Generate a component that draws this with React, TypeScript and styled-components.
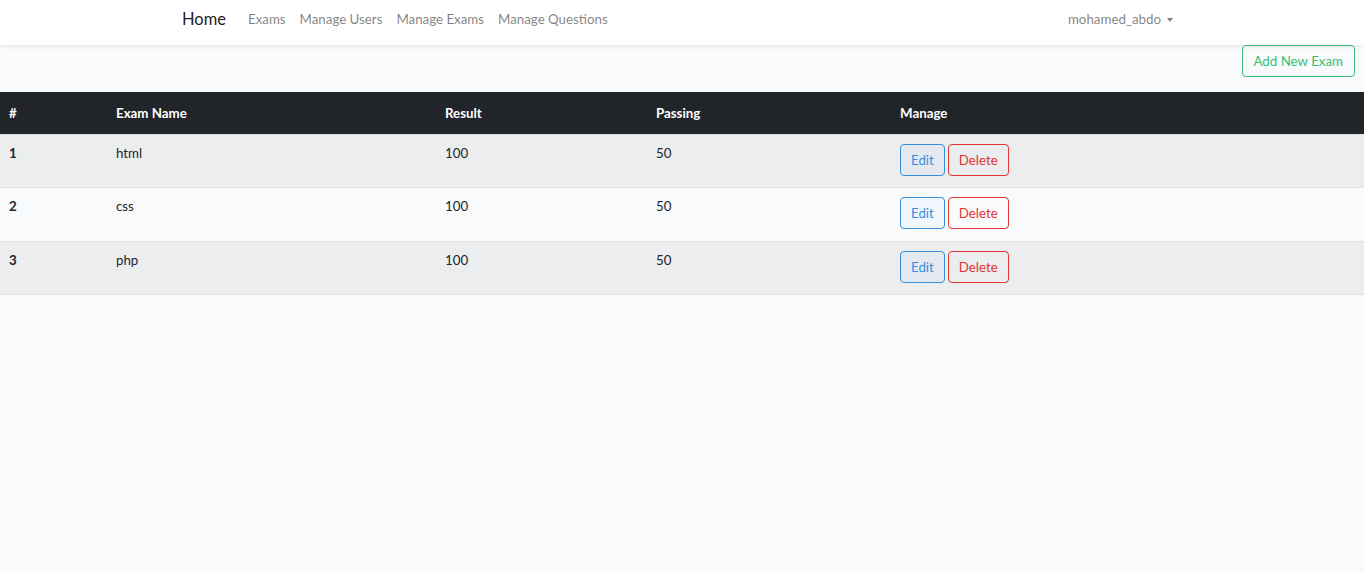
import React from "react";
import styled, { createGlobalStyle } from "styled-components";

const GlobalStyle = createGlobalStyle`
  html, body { margin: 0; padding: 0; }
  body {
    background: #f8fafc;
    font-family: Lato, "Noto Sans", sans-serif;
    font-size: 13.3px;
    color: #212529;
    line-height: 1.6;
  }
  * { box-sizing: border-box; }
`;

const Page = styled.div`
  min-height: 572px;
  background: #f8fafc;
`;

const NavBar = styled.nav`
  background: #fff;
  height: 45px;
  box-shadow: 0 2px 4px rgba(0, 0, 0, 0.075);
  position: relative;
  z-index: 1;
`;

const NavInner = styled.div`
  width: 1030px;
  margin: 0 auto;
  padding: 0 15px 6px;
  height: 100%;
  display: flex;
  align-items: center;
`;

const Brand = styled.a`
  font-size: 16.5px;
  color: rgba(0, 0, 0, 0.9);
  text-decoration: none;
  margin-right: 15px;
  line-height: 1;
`;

const NavList = styled.div`
  display: flex;
  align-items: center;
`;

const NavLink = styled.a`
  font-size: 13.3px;
  color: rgba(0, 0, 0, 0.5);
  text-decoration: none;
  padding: 0 7px;
`;

const Spacer = styled.div`
  flex: 1;
`;

const UserMenu = styled.a`
  font-size: 13.3px;
  color: rgba(0, 0, 0, 0.5);
  display: flex;
  align-items: center;
  padding: 0 9px 0 8px;
  text-decoration: none;
`;

const Caret = styled.span`
  display: inline-block;
  margin-left: 6px;
  margin-top: 1px;
  border-top: 4px solid rgba(0, 0, 0, 0.5);
  border-left: 3.5px solid transparent;
  border-right: 3.5px solid transparent;
`;

const Toolbar = styled.div`
  display: flex;
  justify-content: flex-end;
  padding-right: 9px;
  margin-bottom: 15px;
`;

const OutlineButton = styled.button<{ $tone: string; $tint?: string }>`
  font-family: inherit;
  font-size: 13.3px;
  line-height: 20px;
  height: 32px;
  padding: 5px 11px;
  background: ${(p) => p.$tint || "transparent"};
  color: ${(p) => p.$tone};
  border: 1px solid ${(p) => p.$tone};
  border-radius: 4px;
  cursor: pointer;
`;

const RowButton = styled(OutlineButton)`
  padding: 5px 10px;
`;

const Table = styled.table`
  width: 100%;
  border-collapse: collapse;
`;

const HeadRow = styled.tr`
  background: #212529;
`;

const Th = styled.th<{ $w?: number }>`
  color: #fff;
  font-weight: 700;
  text-align: left;
  padding: 12px 9px;
  line-height: 18px;
  width: ${(p) => (p.$w ? `${p.$w}px` : "auto")};
`;

const BodyRow = styled.tr<{ $striped: boolean }>`
  background: ${(p) => (p.$striped ? "rgba(0, 0, 0, 0.05)" : "transparent")};
  border-top: 1px solid #dee2e6;
  &:last-child { border-bottom: 1px solid #dee2e6; }
`;

const Td = styled.td<{ $bold?: boolean }>`
  vertical-align: top;
  padding: 9px 9px 11.3px;
  line-height: 18px;
  font-weight: ${(p) => (p.$bold ? 700 : 400)};
`;

const Actions = styled.div`
  display: flex;
  gap: 3px;
`;

const exams = [
  { id: 1, name: "html", result: 100, passing: 50 },
  { id: 2, name: "css", result: 100, passing: 50 },
  { id: 3, name: "php", result: 100, passing: 50 },
];

export default function App() {
  return (
    <Page>
      <GlobalStyle />
      <NavBar>
        <NavInner>
          <Brand href="#">Home</Brand>
          <NavList>
            <NavLink href="#">Exams</NavLink>
            <NavLink href="#">Manage Users</NavLink>
            <NavLink href="#">Manage Exams</NavLink>
            <NavLink href="#">Manage Questions</NavLink>
          </NavList>
          <Spacer />
          <UserMenu href="#">
            mohamed_abdo
            <Caret />
          </UserMenu>
        </NavInner>
      </NavBar>
      <Toolbar>
        <OutlineButton $tone="#38c172">Add New Exam</OutlineButton>
      </Toolbar>
      <Table>
        <thead>
          <HeadRow>
            <Th $w={107}>#</Th>
            <Th $w={329}>Exam Name</Th>
            <Th $w={211}>Result</Th>
            <Th $w={244}>Passing</Th>
            <Th>Manage</Th>
          </HeadRow>
        </thead>
        <tbody>
          {exams.map((e, i) => (
            <BodyRow key={e.id} $striped={i % 2 === 0}>
              <Td $bold>{e.id}</Td>
              <Td>{e.name}</Td>
              <Td>{e.result}</Td>
              <Td>{e.passing}</Td>
              <Td>
                <Actions>
                  <RowButton $tone="#3490dc" $tint="rgba(52,144,220,0.04)">
                    Edit
                  </RowButton>
                  <RowButton $tone="#e3342f">Delete</RowButton>
                </Actions>
              </Td>
            </BodyRow>
          ))}
        </tbody>
      </Table>
    </Page>
  );
}
